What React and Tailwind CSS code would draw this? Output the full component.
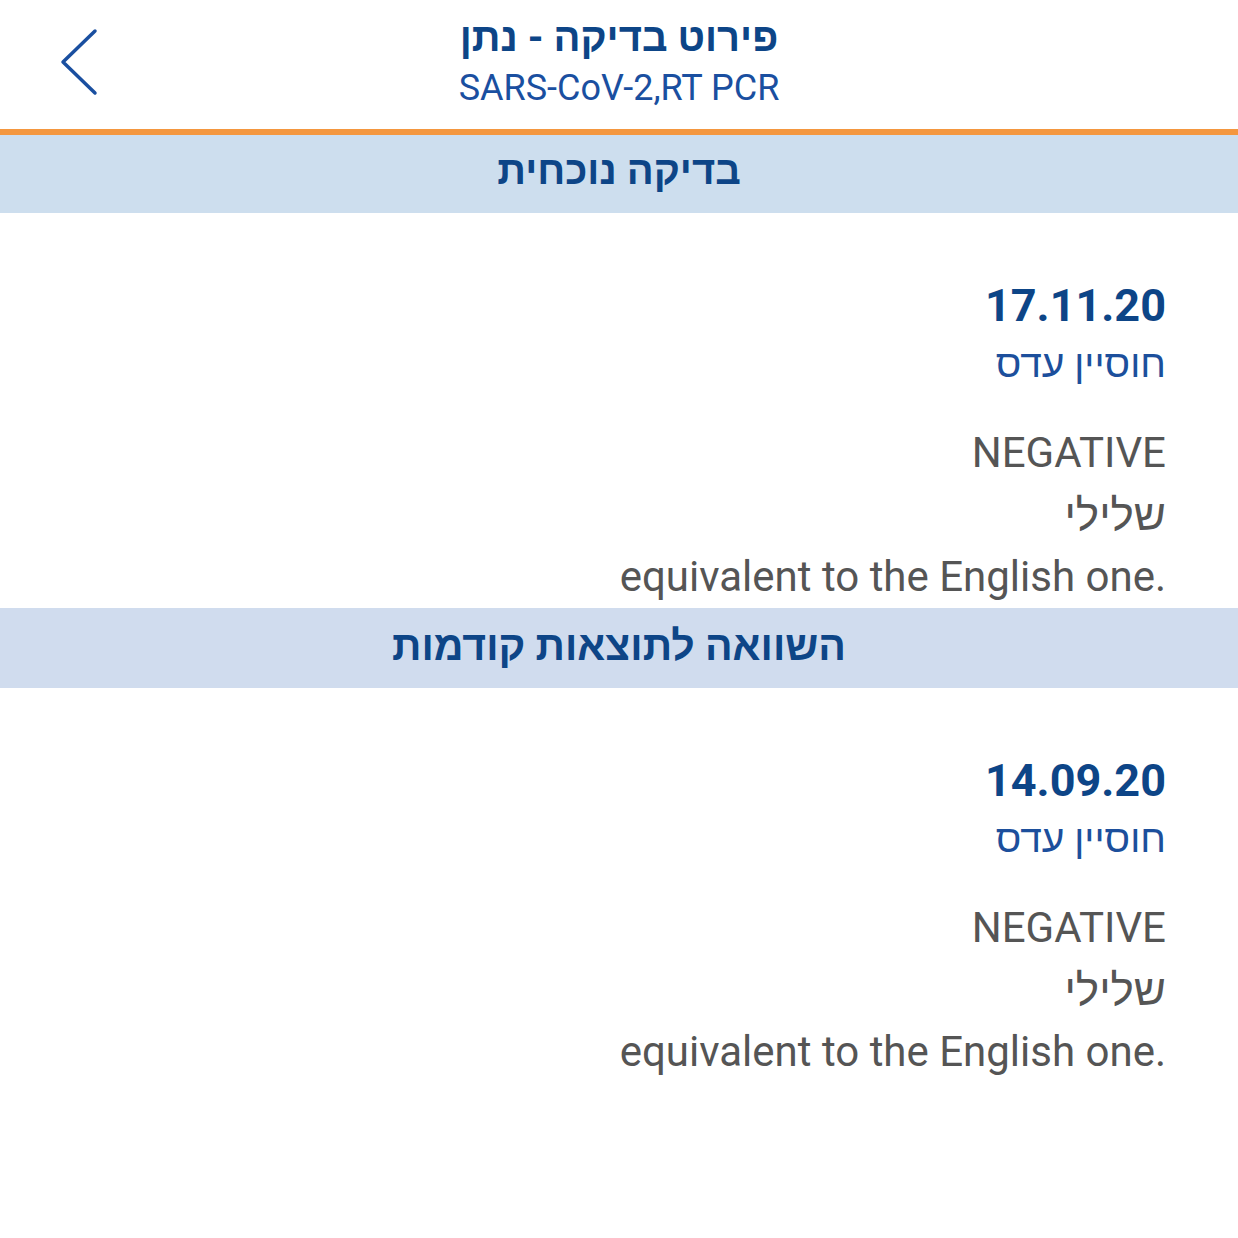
export default function App() {
  const font = { fontFamily: 'Roboto, "Noto Sans", "Liberation Sans", "DejaVu Sans", sans-serif' };
  const Result = ({ date, name }) => (
    <div dir="rtl" className="pt-[64px] pr-[72px] text-right">
      <div className="h-[58px] leading-[58px] text-[45px] font-bold text-[#0d4587]" dir="ltr" style={{ textAlign: 'right' }}>{date}</div>
      <div className="h-[58px] leading-[58px] text-[39px] text-[#1c4f9c]">{name}</div>
      <div className="mt-[29px] h-[62px] leading-[62px] text-[42px] text-[#555555]">NEGATIVE</div>
      <div className="h-[62px] leading-[62px] text-[44px] text-[#555555]">שלילי</div>
      <div className="h-[62px] leading-[62px] text-[42px] text-[#555555]" dir="ltr" style={{ textAlign: 'right' }}>equivalent to the English one.</div>
    </div>
  );
  return (
    <div className="w-[1238px] h-[1238px] bg-white overflow-hidden" style={font}>
      <div className="relative h-[129px] flex flex-col items-center bg-white">
        <svg className="absolute left-[58px] top-[28px]" width="42" height="68" viewBox="0 0 42 68">
          <polyline points="37,3 5,34 37,65" fill="none" stroke="#1a4fa0" strokeWidth="3.5" strokeLinecap="round" strokeLinejoin="round" />
        </svg>
        <div dir="rtl" className="mt-[12px] h-[52px] leading-[52px] text-[40px] font-bold text-[#0d4587]">פירוט בדיקה - נתן</div>
        <div className="h-[48px] leading-[48px] text-[36px] text-[#1a4fa0]">SARS-CoV-2,RT PCR</div>
      </div>
      <div className="h-[6px] bg-[#f4973f]" />
      <div dir="rtl" className="h-[78px] pb-[6px] flex items-center justify-center bg-[#cddeee] text-[40px] font-bold text-[#0d4587]">בדיקה נוכחית</div>
      <Result date="17.11.20" name="חוסיין עדס" />
      <div dir="rtl" className="h-[80px] pb-[2px] flex items-center justify-center bg-[#d0dcee] text-[41px] font-bold text-[#0d4587]">השוואה לתוצאות קודמות</div>
      <Result date="14.09.20" name="חוסיין עדס" />
    </div>
  );
}
